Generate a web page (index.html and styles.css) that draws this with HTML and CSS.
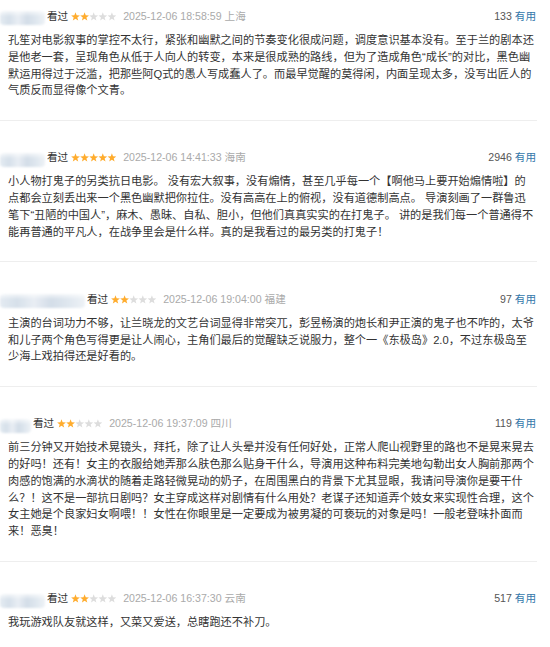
FILE: index.html
```html
<!DOCTYPE html>
<html lang="zh-CN">
<head>
<meta charset="utf-8">
<title>短评</title>
<link rel="stylesheet" href="styles.css">
</head>
<body>
<svg class="defs" width="0" height="0" aria-hidden="true">
  <defs>
    <symbol id="star" viewBox="0 0 9 9">
      <polygon points="4.5,0.2 5.62,3.26 8.87,3.38 6.31,5.39 7.2,8.52 4.5,6.7 1.8,8.52 2.69,5.39 0.13,3.38 3.38,3.26"/>
    </symbol>
  </defs>
</svg>
<div class="list">
  <div class="item">
    <div class="head">
      <div class="info">
        <span class="name w1"></span>
        <span class="status">看过</span>
        <svg class="stars" width="46" height="9" viewBox="0 0 46 9"><use href="#star" x="0" y="0" width="9" height="9" class="on"/><use href="#star" x="9.1" y="0" width="9" height="9" class="on"/><use href="#star" x="18.2" y="0" width="9" height="9" class="off"/><use href="#star" x="27.3" y="0" width="9" height="9" class="off"/><use href="#star" x="36.4" y="0" width="9" height="9" class="off"/></svg>
        <span class="time">2025-12-06 18:58:59</span>
        <span class="loc">上海</span>
      </div>
      <div class="votes"><span class="count">133</span> <span class="useful">有用</span></div>
    </div>
    <p class="text">孔笙对电影叙事的掌控不太行，紧张和幽默之间的节奏变化很成问题，调度意识基本没有。至于兰的剧本还是他老一套，呈现角色从低于人向人的转变，本来是很成熟的路线，但为了造成角色“成长”的对比，黑色幽默运用得过于泛滥，把那些阿Q式的愚人写成蠢人了。而最早觉醒的莫得闲，内面呈现太多，没写出匠人的气质反而显得像个文青。</p>
  </div>
  <div class="item">
    <div class="head">
      <div class="info">
        <span class="name w1"></span>
        <span class="status">看过</span>
        <svg class="stars" width="46" height="9" viewBox="0 0 46 9"><use href="#star" x="0" y="0" width="9" height="9" class="on"/><use href="#star" x="9.1" y="0" width="9" height="9" class="on"/><use href="#star" x="18.2" y="0" width="9" height="9" class="on"/><use href="#star" x="27.3" y="0" width="9" height="9" class="on"/><use href="#star" x="36.4" y="0" width="9" height="9" class="on"/></svg>
        <span class="time">2025-12-06 14:41:33</span>
        <span class="loc">海南</span>
      </div>
      <div class="votes"><span class="count">2946</span> <span class="useful">有用</span></div>
    </div>
    <p class="text">小人物打鬼子的另类抗日电影。 没有宏大叙事，没有煽情，甚至几乎每一个【啊他马上要开始煽情啦】的点都会立刻丢出来一个黑色幽默把你拉住。没有高高在上的俯视，没有道德制高点。 导演刻画了一群鲁迅笔下“丑陋的中国人”，麻木、愚昧、自私、胆小，但他们真真实实的在打鬼子。 讲的是我们每一个普通得不能再普通的平凡人，在战争里会是什么样。真的是我看过的最另类的打鬼子！</p>
  </div>
  <div class="item">
    <div class="head">
      <div class="info">
        <span class="name w2"></span>
        <span class="status">看过</span>
        <svg class="stars" width="46" height="9" viewBox="0 0 46 9"><use href="#star" x="0" y="0" width="9" height="9" class="on"/><use href="#star" x="9.1" y="0" width="9" height="9" class="on"/><use href="#star" x="18.2" y="0" width="9" height="9" class="off"/><use href="#star" x="27.3" y="0" width="9" height="9" class="off"/><use href="#star" x="36.4" y="0" width="9" height="9" class="off"/></svg>
        <span class="time">2025-12-06 19:04:00</span>
        <span class="loc">福建</span>
      </div>
      <div class="votes"><span class="count">97</span> <span class="useful">有用</span></div>
    </div>
    <p class="text">主演的台词功力不够，让兰晓龙的文艺台词显得非常突兀，彭昱畅演的炮长和尹正演的鬼子也不咋的，太爷和儿子两个角色写得更是让人闹心，主角们最后的觉醒缺乏说服力，整个一《东极岛》2.0，不过东极岛至少海上戏拍得还是好看的。</p>
  </div>
  <div class="item">
    <div class="head">
      <div class="info">
        <span class="name w3"></span>
        <span class="status">看过</span>
        <svg class="stars" width="46" height="9" viewBox="0 0 46 9"><use href="#star" x="0" y="0" width="9" height="9" class="on"/><use href="#star" x="9.1" y="0" width="9" height="9" class="on"/><use href="#star" x="18.2" y="0" width="9" height="9" class="off"/><use href="#star" x="27.3" y="0" width="9" height="9" class="off"/><use href="#star" x="36.4" y="0" width="9" height="9" class="off"/></svg>
        <span class="time">2025-12-06 19:37:09</span>
        <span class="loc">四川</span>
      </div>
      <div class="votes"><span class="count">119</span> <span class="useful">有用</span></div>
    </div>
    <p class="text">前三分钟又开始技术晃镜头，拜托，除了让人头晕并没有任何好处，正常人爬山视野里的路也不是晃来晃去的好吗！还有！女主的衣服给她弄那么肤色那么贴身干什么，导演用这种布料完美地勾勒出女人胸前那两个肉感的饱满的水滴状的随着走路轻微晃动的奶子，在周围黑白的背景下尤其显眼，我请问导演你是要干什么？！这不是一部抗日剧吗？女主穿成这样对剧情有什么用处？老谋子还知道弄个妓女来实现性合理，这个女主她是个良家妇女啊喂！！女性在你眼里是一定要成为被男凝的可亵玩的对象是吗！一般老登味扑面而来！恶臭！</p>
  </div>
  <div class="item">
    <div class="head">
      <div class="info">
        <span class="name w1"></span>
        <span class="status">看过</span>
        <svg class="stars" width="46" height="9" viewBox="0 0 46 9"><use href="#star" x="0" y="0" width="9" height="9" class="on"/><use href="#star" x="9.1" y="0" width="9" height="9" class="on"/><use href="#star" x="18.2" y="0" width="9" height="9" class="off"/><use href="#star" x="27.3" y="0" width="9" height="9" class="off"/><use href="#star" x="36.4" y="0" width="9" height="9" class="off"/></svg>
        <span class="time">2025-12-06 16:37:30</span>
        <span class="loc">云南</span>
      </div>
      <div class="votes"><span class="count">517</span> <span class="useful">有用</span></div>
    </div>
    <p class="text">我玩游戏队友就这样，又菜又爱送，总瞎跑还不补刀。</p>
  </div>
</div>
</body>
</html>
```
FILE: styles.css
```css
html, body {
  margin: 0;
  padding: 0;
  background: #ffffff;
}
body {
  font-family: "Liberation Sans", "Noto Sans CJK SC", sans-serif;
  color: #333333;
  overflow: hidden;
}
.defs {
  position: absolute;
  width: 0;
  height: 0;
}
.list {
  width: 537px;
}
.item {
  padding: 28.6px 0 20.6px 0;
  border-bottom: 1px solid #eeeeee;
}
.item:first-child {
  padding-top: 8px;
}
.item:last-child {
  border-bottom: none;
}
.head {
  display: flex;
  align-items: center;
  justify-content: space-between;
  height: 16.8px;
  font-size: 10.6px;
  line-height: 16.8px;
}
.info {
  display: flex;
  align-items: center;
}
.name {
  display: block;
  height: 14px;
  margin-right: 2px;
  border-radius: 4px;
  background:
    linear-gradient(180deg, rgba(255,255,255,0.7) 0%, rgba(255,255,255,0) 40%),
    linear-gradient(90deg, #e4ebf2 0%, #d6e0ea 20%, #e9eef4 40%, #d3dde8 60%, #dfe7ef 80%, #eef2f6 100%);
  filter: blur(1.2px);
  transform: translateY(2px);
}
.w1 { width: 45px; }
.w2 { width: 85px; }
.w3 { width: 31px; }
.status {
  color: #333333;
  margin-right: 3px;
}
.stars {
  display: block;
  margin-right: 6px;
}
.stars .on { fill: #ffac2d; }
.stars .off { fill: #dddddd; }
.time {
  color: #aaaaaa;
  margin-right: 3px;
}
.loc {
  color: #aaaaaa;
}
.votes {
  margin-right: 1px;
  color: #555555;
}
.useful {
  color: #3377aa;
}
.text {
  margin: 7.2px 1px 0 8px;
  font-size: 11.2px;
  line-height: 16.8px;
  color: #333333;
}
```
